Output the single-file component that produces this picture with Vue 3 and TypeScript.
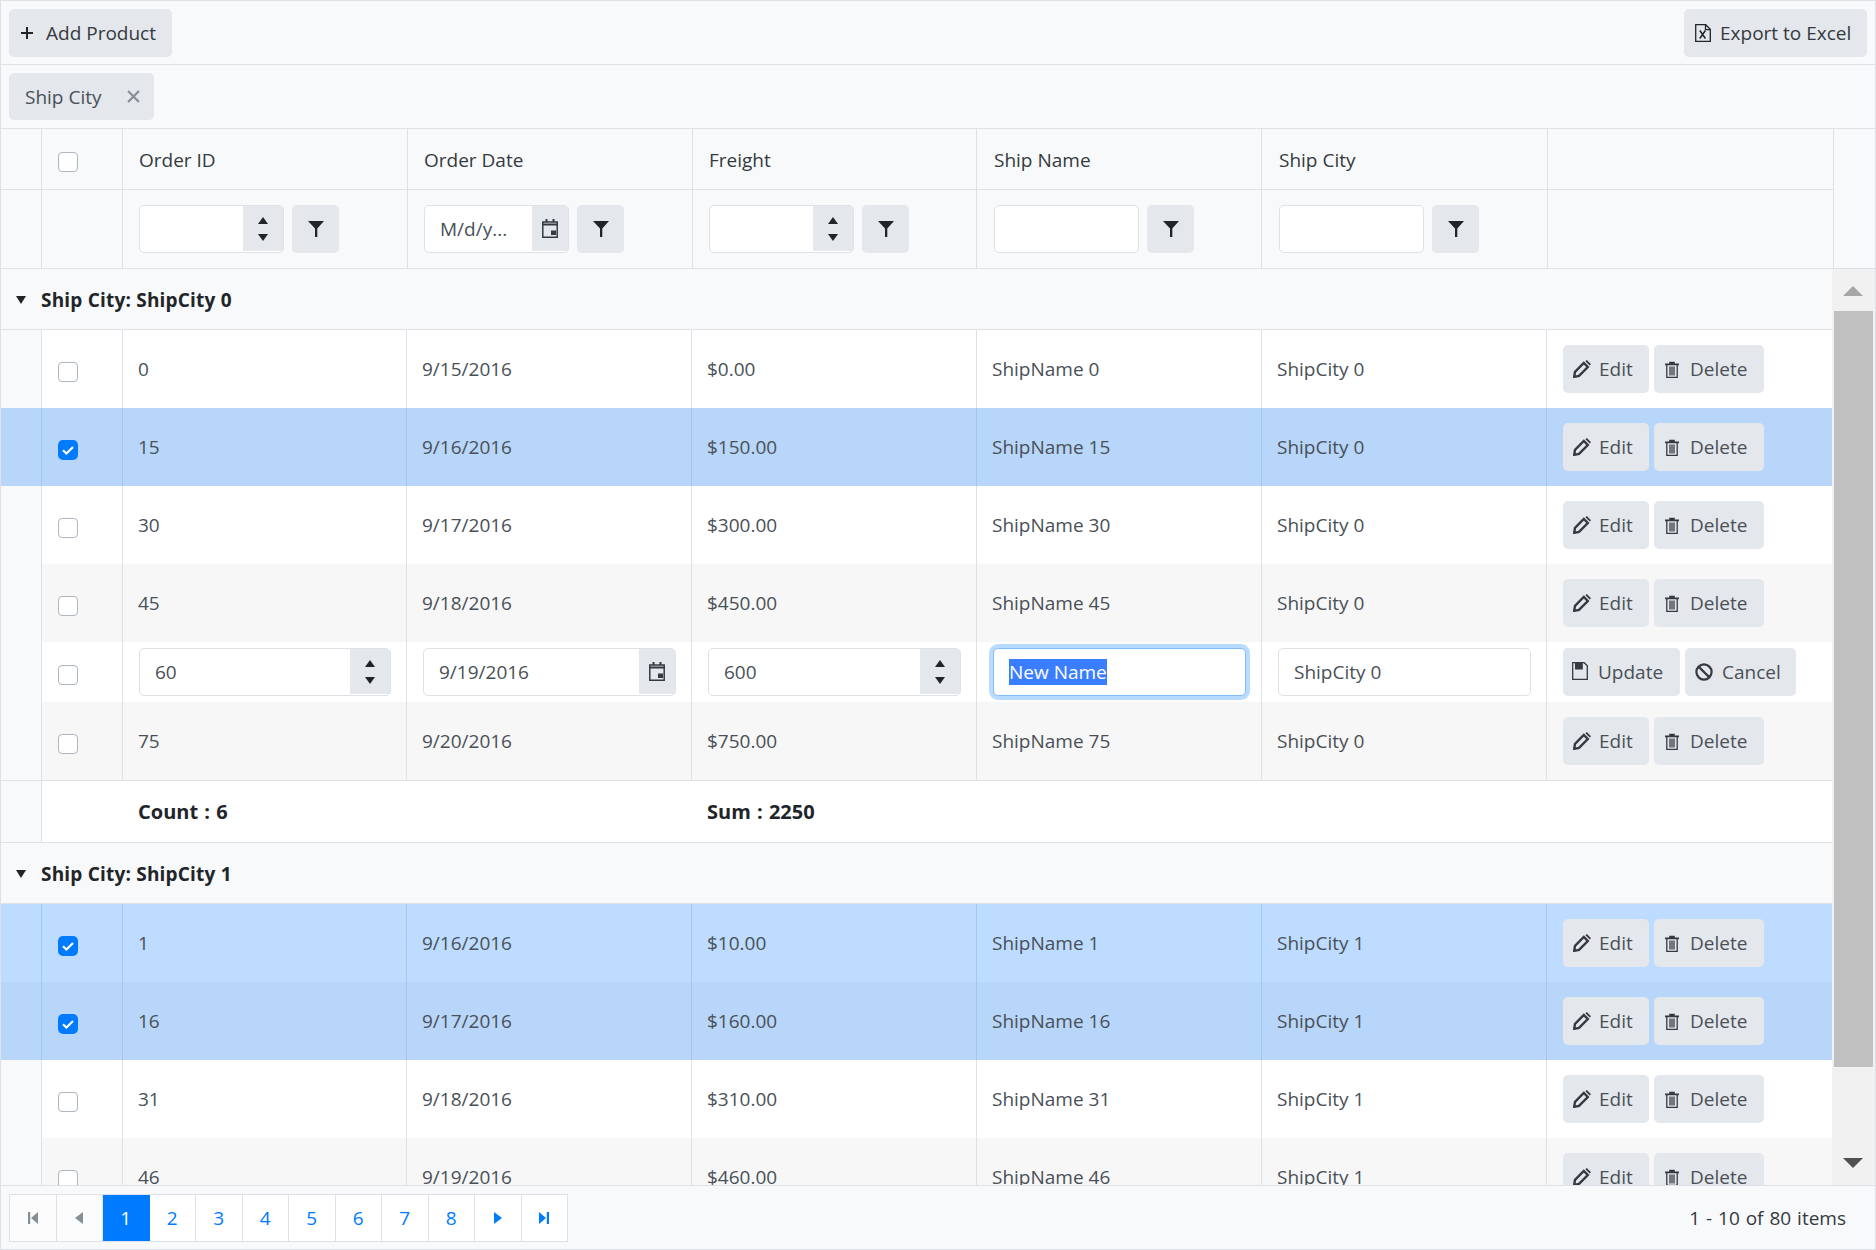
<template>
  <div ref="root" class="grid">
    <svg class="sprite" aria-hidden="true">
      <symbol id="i-plus" viewBox="0 0 12 12"><path d="M6 0v12M0 6h12" fill="none" stroke="currentColor" stroke-width="2" /></symbol>
      <symbol id="i-x" viewBox="0 0 12 12"><path d="M1 1l10 10M11 1L1 11" fill="none" stroke="currentColor" stroke-width="2" /></symbol>
      <symbol id="i-excel" viewBox="0 0 16 18">
        <path d="M.7.7h10l4.6 4.6v12H.7zM10.5.7v5h4.8" fill="none" stroke="currentColor" stroke-width="1.3" />
        <path d="M4.8 6.5l5.6 8M10.4 6.5l-5.6 8" fill="none" stroke="currentColor" stroke-width="1.5" />
      </symbol>
      <symbol id="i-filter" viewBox="0 0 16 16"><path d="M0 0h16L9.3 7.6V16H7V7.6z" fill="currentColor" /></symbol>
      <symbol id="i-cal" viewBox="0 0 16 19">
        <path d="M.8 3h14.4v15.2H.8z" fill="none" stroke="currentColor" stroke-width="1.5" />
        <path d="M0 4.5h16v2H0zM3.5 0h2v3h-2zM10.5 0h2v3h-2zM9 11.5h5V16H9z" fill="currentColor" />
      </symbol>
      <symbol id="i-edit" viewBox="0 0 18 18">
        <path d="M2 11.8l8.8-8.8 4 4L6 15.8l-4.8 1z" fill="none" stroke="currentColor" stroke-width="2.4" />
        <path d="M12.4 1.2L13.8 0 18 4.2 16.8 5.6z" fill="currentColor" />
      </symbol>
      <symbol id="i-trash" viewBox="0 0 14 17">
        <path d="M0 2.6h14v1.6H0zM4.2 2.8V.8h5.6v2" fill="currentColor" />
        <path d="M1.8 4v12.3h10.4V4M5 5.5v9M7 5.5v9M9 5.5v9" fill="none" stroke="currentColor" stroke-width="1.3" />
      </symbol>
      <symbol id="i-save" viewBox="0 0 16 18">
        <path d="M.7.7h11.5l3.1 3.1v13.5H.7z" fill="none" stroke="currentColor" stroke-width="1.3" />
        <path d="M3 1h7.8v6.5H3z" fill="currentColor" />
      </symbol>
      <symbol id="i-ban" viewBox="0 0 18 18">
        <circle cx="9" cy="9" r="7.6" fill="none" stroke="currentColor" stroke-width="2.2" />
        <path d="M3.6 3.6l10.8 10.8" stroke="currentColor" stroke-width="2.2" />
      </symbol>
      <symbol id="i-first" viewBox="0 0 10 12"><path d="M0 0h2.2v12H0zM10 0v12L3 6z" fill="currentColor" /></symbol>
      <symbol id="i-last" viewBox="0 0 10 12"><path d="M10 0H7.8v12H10zM0 0v12l7-6z" fill="currentColor" /></symbol>
      <symbol id="i-prev" viewBox="0 0 8 12"><path d="M8 0v12L0 6z" fill="currentColor" /></symbol>
      <symbol id="i-next" viewBox="0 0 8 12"><path d="M0 0v12l8-6z" fill="currentColor" /></symbol>
    </svg>

    <div class="toolbar">
      <button class="btn add-btn"><svg class="ic-plus"><use href="#i-plus" /></svg>Add Product</button>
      <button class="btn export-btn"><svg class="ic-excel"><use href="#i-excel" /></svg>Export to Excel</button>
    </div>

    <div class="group-area">
      <div class="chip">Ship City<svg class="ic-x"><use href="#i-x" /></svg></div>
    </div>

    <div class="head">
      <div class="head-main">
        <div class="head-row titles">
          <div class="hcell"></div>
          <div class="hcell check-cell"><span class="check"></span></div>
          <div v-for="c in columns" :key="c.title" class="hcell title">{{ c.title }}</div>
          <div class="hcell"></div>
        </div>
        <div class="head-row filters">
          <div class="hcell"></div>
          <div class="hcell"></div>
          <div v-for="c in columns" :key="c.title" class="hcell filter">
            <div v-if="c.filter === 'num'" class="input-group f-input">
              <input class="field" />
              <span class="addon spin"><i class="up"></i><i class="down"></i></span>
            </div>
            <div v-else-if="c.filter === 'date'" class="input-group f-input">
              <input class="field" placeholder="M/d/y..." />
              <span class="addon cal"><svg class="ic-cal"><use href="#i-cal" /></svg></span>
            </div>
            <div v-else class="input-group f-input"><input class="field" /></div>
            <button class="btn filter-btn"><svg class="ic-filter"><use href="#i-filter" /></svg></button>
          </div>
          <div class="hcell"></div>
        </div>
      </div>
      <div class="head-side"></div>
    </div>

    <div class="body">
      <div class="viewport">
        <template v-for="g in groups" :key="g.city">
          <div class="caption"><i class="caret"></i>Ship City: {{ g.city }}</div>

          <template v-for="(r, i) in g.rows" :key="r.id">
            <div v-if="r.editing" class="row edit-row">
              <div class="cell indent"></div>
              <div class="cell check-cell"><span class="check"></span></div>
              <div class="cell">
                <div class="input-group"><input class="field" :value="r.id" /><span class="addon spin"><i class="up"></i><i class="down"></i></span></div>
              </div>
              <div class="cell">
                <div class="input-group"><input class="field" :value="r.date" /><span class="addon cal"><svg class="ic-cal"><use href="#i-cal" /></svg></span></div>
              </div>
              <div class="cell">
                <div class="input-group"><input class="field" :value="r.freight" /><span class="addon spin"><i class="up"></i><i class="down"></i></span></div>
              </div>
              <div class="cell">
                <div class="input-group focused"><input class="field name-input" value="New Name" /></div>
              </div>
              <div class="cell">
                <div class="input-group"><input class="field" :value="g.city" /></div>
              </div>
              <div class="cell actions">
                <button class="btn cmd update"><svg class="ic-save"><use href="#i-save" /></svg>Update</button>
                <button class="btn cmd cancel"><svg class="ic-ban"><use href="#i-ban" /></svg>Cancel</button>
              </div>
            </div>

            <div v-else class="row" :class="{ alt: i % 2 === 1, selected: r.selected }">
              <div class="cell indent"></div>
              <div class="cell check-cell">
                <span class="check" :class="{ on: r.selected }">
                  <svg v-if="r.selected" viewBox="0 0 20 20"><path d="M5 10.3l3.4 3.2L15 7" fill="none" stroke="#fff" stroke-width="2.2" /></svg>
                </span>
              </div>
              <div class="cell">{{ r.id }}</div>
              <div class="cell">{{ r.date }}</div>
              <div class="cell">{{ money(r.freight) }}</div>
              <div class="cell">ShipName {{ r.id }}</div>
              <div class="cell">{{ g.city }}</div>
              <div class="cell actions">
                <button class="btn cmd edit"><svg class="ic-edit"><use href="#i-edit" /></svg>Edit</button>
                <button class="btn cmd delete"><svg class="ic-trash"><use href="#i-trash" /></svg>Delete</button>
              </div>
            </div>
          </template>

          <div v-if="g.summary" class="row summary">
            <div class="indent"></div>
            <div></div>
            <div class="sum-cell">Count : {{ g.rows.length }}</div>
            <div></div>
            <div class="sum-cell">Sum : {{ total(g.rows) }}</div>
          </div>
        </template>
      </div>

      <div class="scrollbar">
        <div class="sb-btn"><i class="sb-up"></i></div>
        <div class="sb-thumb"></div>
        <div class="sb-rest"><i class="sb-down"></i></div>
      </div>
    </div>

    <div class="pager">
      <div class="pages">
        <span class="pg muted"><svg class="ic-pg"><use href="#i-first" /></svg></span>
        <span class="pg muted"><svg class="ic-pg narrow"><use href="#i-prev" /></svg></span>
        <span v-for="p in 8" :key="p" class="pg" :class="{ active: p === 1 }">{{ p }}</span>
        <span class="pg"><svg class="ic-pg narrow"><use href="#i-next" /></svg></span>
        <span class="pg"><svg class="ic-pg"><use href="#i-last" /></svg></span>
      </div>
      <div class="count">1 - 10 of 80 items</div>
    </div>
  </div>
</template>

<script setup lang="ts">
import { ref, onMounted } from 'vue'

interface Order {
  id: number
  date: string
  freight: number
  selected?: boolean
  editing?: boolean
}

const columns = [
  { title: 'Order ID', filter: 'num' },
  { title: 'Order Date', filter: 'date' },
  { title: 'Freight', filter: 'num' },
  { title: 'Ship Name', filter: 'text' },
  { title: 'Ship City', filter: 'text' }
]

const groups: { city: string; summary: boolean; rows: Order[] }[] = [
  {
    city: 'ShipCity 0',
    summary: true,
    rows: [
      { id: 0, date: '9/15/2016', freight: 0 },
      { id: 15, date: '9/16/2016', freight: 150, selected: true },
      { id: 30, date: '9/17/2016', freight: 300 },
      { id: 45, date: '9/18/2016', freight: 450 },
      { id: 60, date: '9/19/2016', freight: 600, editing: true },
      { id: 75, date: '9/20/2016', freight: 750 }
    ]
  },
  {
    city: 'ShipCity 1',
    summary: false,
    rows: [
      { id: 1, date: '9/16/2016', freight: 10, selected: true },
      { id: 16, date: '9/17/2016', freight: 160, selected: true },
      { id: 31, date: '9/18/2016', freight: 310 },
      { id: 46, date: '9/19/2016', freight: 460 }
    ]
  }
]

const root = ref<HTMLElement | null>(null)

const money = (v: number) => '$' + v.toFixed(2)
const total = (rows: Order[]) => rows.reduce((sum, r) => sum + r.freight, 0)

onMounted(() => {
  // the row being edited opens with its name selected
  const input = root.value?.querySelector<HTMLInputElement>('.name-input')
  input?.focus()
  input?.select()
})
</script>

<style>
html,
body {
  margin: 0;
  background: #fff;
}
</style>

<style scoped>
.grid {
  width: 1876px;
  height: 1250px;
  box-sizing: border-box;
  border: 1px solid #dee2e6;
  display: flex;
  flex-direction: column;
  overflow: hidden;
  font-family: "Open Sans", "Liberation Sans", sans-serif;
  font-size: 19px;
  color: #495057;
  background: #fff;
}

.sprite {
  display: none;
}

.btn {
  display: inline-flex;
  align-items: center;
  height: 48px;
  box-sizing: border-box;
  padding: 0;
  border: 0;
  border-radius: 5px;
  background: #e4e7eb;
  color: #495057;
  font: inherit;
}

.toolbar {
  height: 64px;
  box-sizing: border-box;
  flex: none;
  display: flex;
  justify-content: space-between;
  align-items: center;
  padding: 0 8px 7px;
  background: #f8f9fa;
  border-bottom: 1px solid #dee2e6;
}

.toolbar .btn {
  margin-top: 8px;
  color: #343a40;
}

.add-btn {
  width: 163px;
  padding-left: 12px;
}

.export-btn {
  width: 183px;
  padding-left: 11px;
}

.ic-plus {
  width: 12px;
  height: 12px;
  margin-right: 13px;
  color: #212529;
}

.ic-excel {
  width: 16px;
  height: 18px;
  margin-right: 9px;
  color: #212529;
}

.group-area {
  height: 64px;
  box-sizing: border-box;
  flex: none;
  padding: 8px 8px 0;
  background: #f8f9fa;
  border-bottom: 1px solid #dee2e6;
}

.chip {
  display: inline-flex;
  align-items: center;
  height: 47px;
  width: 145px;
  box-sizing: border-box;
  padding-left: 16px;
  border-radius: 5px;
  background: #e4e7eb;
}

.ic-x {
  width: 13px;
  height: 13px;
  margin-left: 26px;
  color: #868e96;
}

.head {
  display: flex;
  flex: none;
  background: #f8f9fa;
  border-bottom: 1px solid #dee2e6;
}

.head-main {
  width: 1833px;
  flex: none;
}

.head-side {
  flex: 1;
}

.head-row {
  display: grid;
  grid-template-columns: 41px 81px 285px 285px 284px 285px 286px minmax(0, 1fr);
}

.row {
  display: grid;
  grid-template-columns: 41px 81px 284px 285px 285px 285px 285px minmax(0, 1fr);
}

.titles {
  height: 61px;
  border-bottom: 1px solid #dee2e6;
  box-sizing: border-box;
}

.filters {
  height: 78px;
}

.hcell {
  box-sizing: border-box;
  border-right: 1px solid #dee2e6;
  display: flex;
  align-items: center;
}

.title {
  padding: 1px 0 0 16px;
  color: #343a40;
}

.filter {
  padding: 0 0 0 16px;
  gap: 8px;
}

/* the last two data columns sit a pixel further in */
.title:nth-child(6),
.title:nth-child(7),
.filter:nth-child(6),
.filter:nth-child(7) {
  padding-left: 17px;
}

.hcell.check-cell,
.cell.check-cell {
  padding: 0 0 0 16px;
}

.check {
  display: block;
  flex: none;
  width: 20px;
  height: 20px;
  box-sizing: border-box;
  margin-top: 6px;
  border: 1px solid #adb5bd;
  border-radius: 4px;
  background: #fff;
}

.check.on {
  border: 0;
  border-radius: 5px;
  background: #007bff;
}

.check svg {
  display: block;
  width: 20px;
  height: 20px;
}

.input-group {
  flex: 1;
  min-width: 0;
  height: 48px;
  box-sizing: border-box;
  display: flex;
  border: 1px solid #dee2e6;
  border-radius: 5px;
  background: #fff;
  overflow: hidden;
}

.f-input {
  flex: none;
  width: 145px;
}

.input-group.focused {
  border-color: #80bdff;
  box-shadow: 0 0 0 4px #b8dcff;
  overflow: visible;
}

.field {
  flex: 1;
  min-width: 0;
  box-sizing: border-box;
  padding: 0 15px;
  border: 0;
  outline: 0;
  background: transparent;
  color: #495057;
  font: inherit;
}

.field::placeholder {
  color: #495057;
  opacity: 1;
}

.name-input::selection {
  background: #3a7eff;
  color: #fff;
}

.addon {
  flex: none;
  width: 40px;
  margin-bottom: 1px;
  background: #e4e7eb;
  display: flex;
  flex-direction: column;
  align-items: center;
  justify-content: center;
}

.cal {
  width: 36px;
}

.spin {
  gap: 10px;
}

.spin i {
  display: block;
  width: 0;
  height: 0;
  border-left: 5px solid transparent;
  border-right: 5px solid transparent;
}

.up {
  border-bottom: 7px solid #212529;
}

.down {
  border-top: 7px solid #212529;
}

.ic-cal {
  width: 16px;
  height: 19px;
  color: #343a40;
}

.filter-btn {
  width: 47px;
  justify-content: center;
}

.ic-filter {
  width: 16px;
  height: 16px;
  color: #212529;
}

.body {
  flex: 1;
  min-height: 0;
  display: flex;
  background: #fff;
}

.viewport {
  width: 1831px;
  flex: none;
  overflow: hidden;
}

.caption {
  height: 61px;
  box-sizing: border-box;
  display: flex;
  align-items: center;
  padding: 1px 0 0 15px;
  background: #f8f9fa;
  border-bottom: 1px solid #dee2e6;
  color: #212529;
  font-weight: 700;
  letter-spacing: 0.2px;
}

.caret {
  width: 0;
  height: 0;
  margin-right: 15px;
  border-left: 5px solid transparent;
  border-right: 5px solid transparent;
  border-top: 8px solid #212529;
}

.row {
  height: 78px;
  background: #fff;
}

.row.alt {
  background: #f7f7f7;
}

.row.selected {
  background: #bddcff;
}

.row.selected.alt {
  background: #b8d6f9;
}

.edit-row {
  height: 60px;
}

.cell {
  box-sizing: border-box;
  min-width: 0;
  display: flex;
  align-items: center;
  padding: 0 15px;
  border-right: 1px solid #dee2e6;
}

.cell:has(.input-group) {
  padding: 0 15px 0 16px;
}

.cell:last-child {
  border-right: 0;
  padding-left: 16px;
}

.selected .cell {
  border-right-color: #a6c7ea;
}

.indent {
  padding: 0;
  background: #f8f9fa;
  box-sizing: border-box;
  border-right: 1px solid #dee2e6;
}

.selected .indent {
  background: transparent;
}

.actions {
  gap: 5px;
}

.cmd {
  flex: none;
}

.edit {
  width: 86px;
  padding-left: 10px;
}

.delete {
  width: 110px;
  padding-left: 11px;
}

.update {
  width: 117px;
  padding-left: 9px;
}

.cancel {
  width: 111px;
  padding-left: 10px;
}

.ic-edit {
  width: 18px;
  height: 18px;
  margin-right: 8px;
  color: #343a40;
}

.ic-trash {
  width: 14px;
  height: 17px;
  margin-right: 11px;
  color: #343a40;
}

.ic-save {
  width: 16px;
  height: 18px;
  margin-right: 10px;
  margin-top: -3px;
  color: #343a40;
}

.ic-ban {
  width: 18px;
  height: 18px;
  margin-right: 9px;
  color: #343a40;
}

.summary {
  height: 63px;
  box-sizing: border-box;
  border-top: 1px solid #dee2e6;
  border-bottom: 1px solid #dee2e6;
}

.sum-cell {
  display: flex;
  align-items: center;
  padding-left: 15px;
  color: #212529;
  font-size: 20px;
  font-weight: 700;
  word-spacing: 1px;
  white-space: nowrap;
}

.scrollbar {
  flex: 1;
  display: flex;
  flex-direction: column;
  background: #f1f1f1;
}

.sb-btn {
  height: 42px;
  flex: none;
  display: flex;
  justify-content: center;
  padding: 17px 1px 0 0;
  box-sizing: border-box;
}

.sb-up {
  width: 0;
  height: 0;
  border-left: 10px solid transparent;
  border-right: 10px solid transparent;
  border-bottom: 10px solid #a6a6a6;
}

.sb-thumb {
  height: 756px;
  flex: none;
  margin: 0 2px;
  background: #c1c1c1;
}

.sb-rest {
  flex: 1;
  display: flex;
  justify-content: center;
  align-items: flex-end;
  padding: 0 1px 17px 0;
}

.sb-down {
  width: 0;
  height: 0;
  border-left: 10px solid transparent;
  border-right: 10px solid transparent;
  border-top: 10px solid #505050;
}

.pager {
  height: 64px;
  box-sizing: border-box;
  flex: none;
  display: flex;
  align-items: center;
  justify-content: space-between;
  padding: 0 29px 0 8px;
  background: #f8f9fa;
  border-top: 1px solid #dee2e6;
}

.pages {
  display: grid;
  grid-template-columns: repeat(12, 46.5px);
  border: 1px solid #dee2e6;
  border-right: 0;
  background: #fff;
}

.pg {
  height: 46px;
  box-sizing: border-box;
  display: flex;
  align-items: center;
  justify-content: center;
  border-right: 1px solid #dee2e6;
  color: #007bff;
}

.pg.muted {
  background: #fcfcfc;
  color: #868e96;
}

.pg.active {
  background: #007bff;
  color: #fff;
  border-right-color: #007bff;
}

.ic-pg {
  width: 10px;
  height: 12px;
}

.ic-pg.narrow {
  width: 8px;
}

.count {
  color: #343a40;
  word-spacing: 1px;
}
</style>
